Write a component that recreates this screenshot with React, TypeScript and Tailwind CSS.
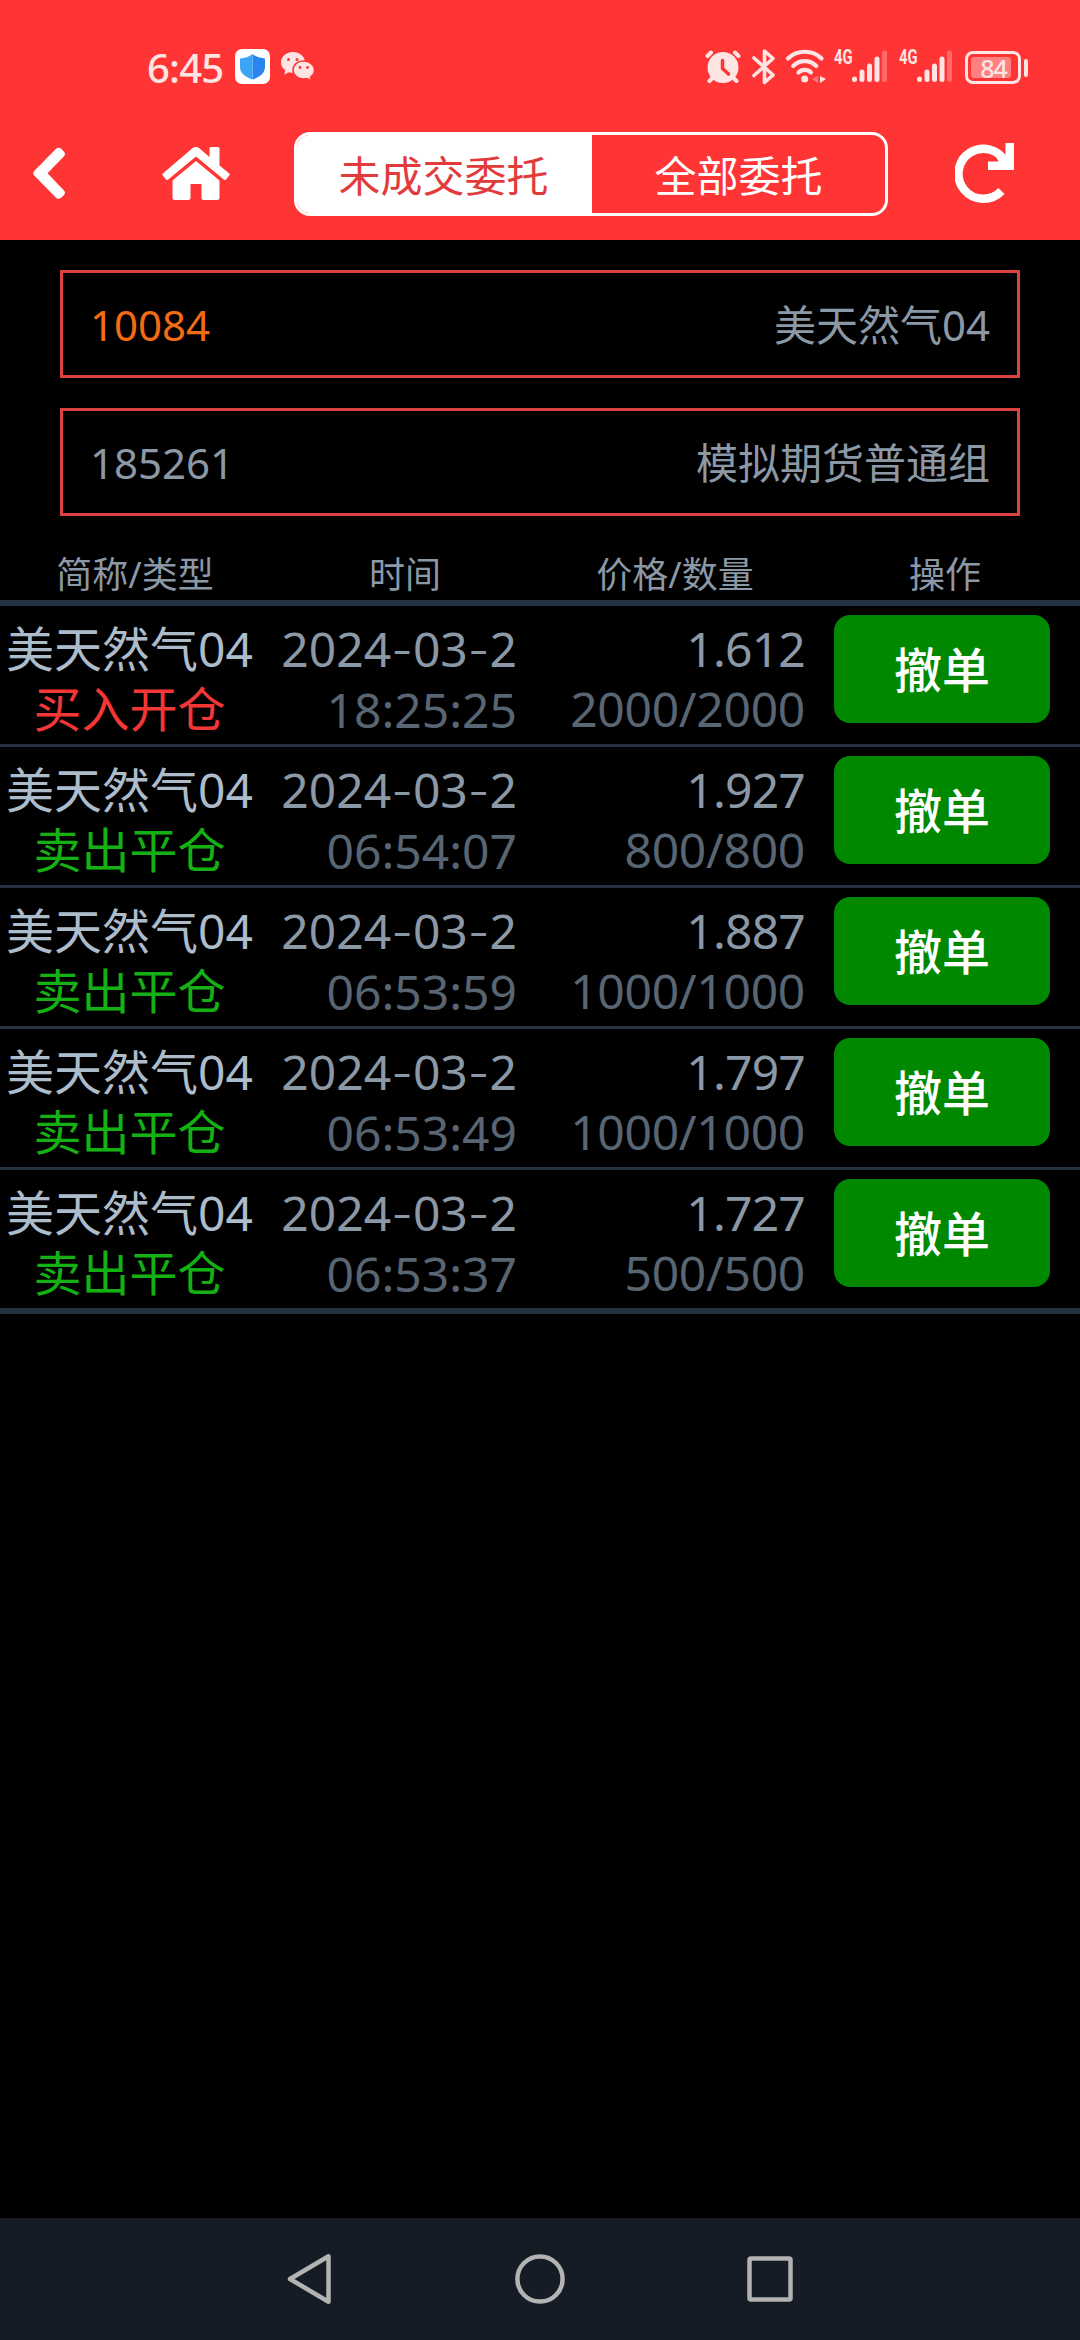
import { FC, Fragment } from "react";

interface Order {
  name: string;
  side: "buy" | "sell";
  date: string;
  time: string;
  price: string;
  amount: string;
}

const orders: Order[] = [
  { name: "美天然气04", side: "buy", date: "2024-03-2", time: "18:25:25", price: "1.612", amount: "2000/2000" },
  { name: "美天然气04", side: "sell", date: "2024-03-2", time: "06:54:07", price: "1.927", amount: "800/800" },
  { name: "美天然气04", side: "sell", date: "2024-03-2", time: "06:53:59", price: "1.887", amount: "1000/1000" },
  { name: "美天然气04", side: "sell", date: "2024-03-2", time: "06:53:49", price: "1.797", amount: "1000/1000" },
  { name: "美天然气04", side: "sell", date: "2024-03-2", time: "06:53:37", price: "1.727", amount: "500/500" }
];

const columns = ["简称/类型", "时间", "价格/数量", "操作"];

const SignalIcon: FC = () => (
  <div className="flex">
    <span className="w-[18px] h-4 text-[20px] leading-4 font-bold font-['Roboto']">
      <span className="inline-block origin-left scale-x-[0.74]">4G</span>
    </span>
    <svg className="w-[35px] h-[34px]" viewBox="0 0 35 34" fill="none" stroke="currentColor" strokeWidth="5" strokeLinecap="round">
      <path d="M2.5 30v.5M10 23v7.500M17.500 17v13.500M25 10v20.500" />
      <path d="M32.500 4v26.500" opacity="0.3" />
    </svg>
  </div>
);

const StatusBar: FC = () => (
  <div className="flex h-[108px] items-start pl-[147px] pr-[52px] pt-[49px] text-[#ffe4e4]">
    <span className="w-[88px] text-[40px] leading-[38px] font-medium tracking-[-0.8px]">6:45</span>
    <svg className="w-[35px] h-[35px]" viewBox="0 0 35 35">
      <rect width="35" height="35" rx="7" fill="#fff" />
      <path d="M17.500 5c4 3 8 4 12.500 4.500v8.500c0 6-5 10-12.500 12.500z" fill="#2b84ee" />
      <path d="M17.500 5c-4 3-8 4-12.500 4.500v8.500c0 6 5 10 12.500 12.500z" fill="#3da5f5" />
    </svg>
    <svg className="ml-[11px] mt-[2px] w-[35px] h-[31px]" viewBox="0 0 35 31">
      <path d="M12 1C5.500 1 0 5.500 0 11.500c0 3.500 1.800 6 4.300 7.800L3.300 23.500l4.600-2.300c1.300.4 2.700.5 4.100.5 6.500 0 12-4.300 12-10.200S18.500 1 12 1z" fill="currentColor" />
      <path d="M22.500 10C16.500 10 12 14 12 19s4.500 9 10.500 9c1.400 0 2.500-.2 3.600-.5l4.400 2.300-1-3.700c2.300-1.600 4-4.200 4-7.100 0-5-5-9-11-9z" fill="currentColor" stroke="#ff3535" strokeWidth="1.500" />
      <g fill="#ff3535">
        <circle cx="7.500" cy="8.500" r="1.500" />
        <circle cx="16" cy="8.500" r="1.500" />
        <circle cx="19" cy="16.500" r="1.400" />
        <circle cx="26.500" cy="16.500" r="1.400" />
      </g>
    </svg>
    <div className="ml-auto flex">
      <svg className="w-[36px] h-[35px]" viewBox="0 0 36 35" fill="none" stroke="currentColor" strokeWidth="4" strokeLinecap="round">
        <circle cx="18" cy="18.500" r="15.500" fill="currentColor" stroke="none" />
        <path d="M2.500 7l3.500-3.500M33.500 7L30 3.500M7 29.500l-2.500 2.500M29 29.500l2.500 2.500" />
        <path d="M17.500 11.500v8l6 5.500" stroke="#ff3535" strokeWidth="3.500" />
      </svg>
      <svg className="ml-[11px] w-[24px] h-[36px]" viewBox="0 0 24 36" fill="none" stroke="currentColor" strokeWidth="3.600" strokeLinecap="round" strokeLinejoin="round">
        <path d="M2 9l19 17-8.500 7.500V2L21 9.500 2 26.500" />
      </svg>
      <svg className="ml-[9px] w-[42px] h-[35px]" viewBox="0 0 42 35" fill="none" stroke="currentColor" strokeWidth="4.200" strokeLinecap="round">
        <path d="M3 9.500c9-9 24.500-9 33.500 0M8.200 17c6.500-6.500 16.500-6.500 23 0M13.500 23.500c3.500-3.500 9-3.500 12.500 0" />
        <circle cx="19.700" cy="30" r="3.500" fill="currentColor" stroke="none" />
        <path d="M35 27v7l6-4z" fill="currentColor" stroke="none" />
        <path d="M33 27v7l-6-4z" fill="currentColor" stroke="none" opacity="0.4" />
      </svg>
      <div className="ml-[7px]">
        <SignalIcon />
      </div>
      <div className="ml-[12px]">
        <SignalIcon />
      </div>
      <div className="ml-[13px] mt-px flex items-center">
        <div className="flex h-[33px] w-[56px] items-center justify-center rounded-[8px] border-[3px] border-current">
          <div className="h-[21px] w-[40px] mr-[4px] rounded-[3px] bg-[#ff8080] pl-[5px] text-center text-[25px] leading-[22px] font-medium tracking-[-1px]">84</div>
        </div>
        <div className="ml-[3px] h-[18px] w-1 rounded-full bg-current" />
      </div>
    </div>
  </div>
);

const Header: FC = () => (
  <header className="h-[240px] bg-[#ff3535] text-white">
    <StatusBar />
    <div className="flex h-[132px] items-start pt-6">
      <svg className="ml-[33px] mt-[15px] w-[33px] h-[53px]" viewBox="0 0 33 53">
        <path d="M23.300 1.600q2.700-2 5.200.5l2.300 2.300q2.300 2.600 0 5L14.500 26.300l16.300 17q2.300 2.500 0 5l-2.300 2.300q-2.500 2.300-5.200.4L1.200 28.500q-1.800-2.200 0-4.400z" fill="currentColor" />
      </svg>
      <svg className="ml-[96px] mt-[15px] w-[68px] h-[54px]" viewBox="0 0 68 54" fill="currentColor">
        <path d="M31 .8q3-1.700 6 .2l10.500 9V1.500q0-1.500 1.500-1.500h7q1.500 0 1.500 1.500v17l9.700 8q1 1 0 2l-3.200 4q-1 1-2.200 0L34 9.500 6.200 32.500q-1.200 1-2.200 0l-3.200-4q-1-1 0-2z" />
        <path d="M34 14l23.500 19.500V51q0 2-2 2H41.500q-2 0-2-2V37h-11v14q0 2-2 2H12.500q-2 0-2-2V33.500z" />
      </svg>
      <div className="ml-[64px] flex h-[84px] w-[594px] overflow-hidden rounded-[16px] border-[3px] border-white text-[42px] leading-[80px]">
        <button className="w-[295px] bg-white pt-px pr-[2px] text-center text-[#e23b3b]">未成交委托</button>
        <button className="w-[293px] pt-px text-center">全部委托</button>
      </div>
      <svg className="ml-[67px] mt-[11px] w-[60px] h-[61px]" viewBox="0 0 60 61" fill="none" stroke="currentColor" strokeWidth="8.500">
        <path d="M46.500 48A25 25 0 1 1 51 20" />
        <path d="M54.700 0v22.700H33" />
        <path d="M40 12h11v11h-5z" fill="currentColor" stroke="none" />
      </svg>
    </div>
  </header>
);

// the default hyphen is too short next to tabular digits
const DateText: FC<{ value: string }> = ({ value }) => (
  <>
    {value.split("-").map((part, i) => (
      <Fragment key={i}>
        {i > 0 && <span className="font-['Inter'] font-light">-</span>}
        {part}
      </Fragment>
    ))}
  </>
);

const OrderRow: FC<{ order: Order }> = ({ order }) => (
  <div className="flex h-[141px] border-b-[3px] border-[#25323f] last:h-[144px] last:border-b-[6px] pt-[13px] text-[48px] leading-[60px]">
    <div className="w-[259px] text-center">
      <p className="whitespace-nowrap text-[#adbccb]">{order.name}</p>
      {order.side === "buy" ? (
        <p className="text-[#f53636]">买入开仓</p>
      ) : (
        <p className="text-[#14b014]">卖出平仓</p>
      )}
    </div>
    <div className="w-[258px] text-right">
      <p className="text-[#8b98a6]"><DateText value={order.date} /></p>
      <p className="text-[#586573]">{order.time}</p>
    </div>
    <div className="w-[288px] text-right tracking-[-0.3px]">
      <p className="text-[#8b98a6] tracking-[-0.8px]">{order.price}</p>
      <p className="text-[#586573]">{order.amount}</p>
    </div>
    <button className="ml-[29px] -mt-1 h-[108px] w-[216px] rounded-[16px] bg-[#008800] pt-[2px] text-center font-medium text-white">
      撤单
    </button>
  </div>
);

const NavBar: FC = () => (
  <nav className="flex h-[122px] items-center justify-center gap-[180px] bg-[#151c25] text-[#b3b3b3]">
    <svg className="w-[50px] h-[52px]" viewBox="0 0 50 52" fill="none" stroke="currentColor" strokeWidth="4.500" strokeLinejoin="round">
      <path d="M43.500 3.300v45.400L5 26z" />
    </svg>
    <svg className="w-[50px] h-[50px]" viewBox="0 0 50 50" fill="none" stroke="currentColor" strokeWidth="4.500">
      <circle cx="25" cy="25" r="22.600" />
    </svg>
    <svg className="w-[50px] h-[50px]" viewBox="0 0 50 50" fill="none" stroke="currentColor" strokeWidth="4.500">
      <rect x="4.500" y="4.500" width="41" height="41" rx="1.500" />
    </svg>
  </nav>
);

const App: FC = () => {
  return (
    <div className="flex h-[2340px] w-[1080px] flex-col bg-black font-['Noto_Sans','Noto_Sans_CJK_SC',sans-serif]">
      <Header />
      <main className="flex-1">
        <div className="space-y-[30px] px-[60px] pt-[30px] text-[42px] text-[#8b98a6]">
          <div className="flex h-[108px] items-center justify-between border-[3px] border-[#dc4242] px-[27px] pt-px">
            <span className="text-[#f26c14]">10084</span>
            <span>美天然气04</span>
          </div>
          <div className="flex h-[108px] items-center justify-between border-[3px] border-[#dc4242] px-[27px] pt-px">
            <span>185261</span>
            <span>模拟期货普通组</span>
          </div>
        </div>
        <div className="grid h-[90px] grid-cols-4 border-b-[6px] border-[#233240] pt-[32px] text-center text-[36px] leading-[54px] text-[#8b98a6]">
          {columns.map((c) => (
            <span key={c}>{c}</span>
          ))}
        </div>
        <div>
          {orders.map((order) => (
            <OrderRow key={order.time} order={order} />
          ))}
        </div>
      </main>
      <NavBar />
    </div>
  );
};

export default App;
